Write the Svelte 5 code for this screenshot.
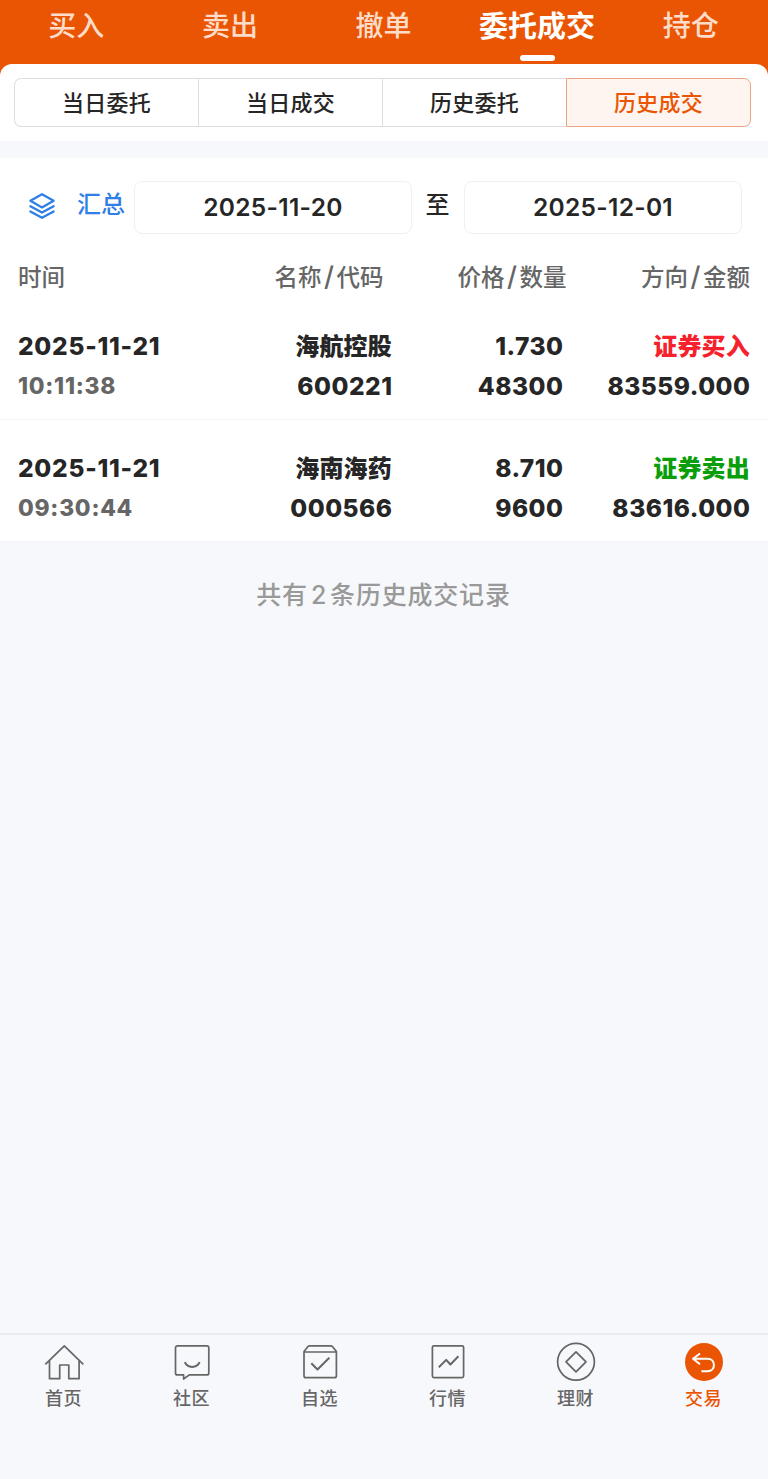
<script lang="ts">
  const tabs = ["买入", "卖出", "撤单", "委托成交", "持仓"];
  const subTabs = ["当日委托", "当日成交", "历史委托", "历史成交"];
  const columns = [["时间"], ["名称", "代码"], ["价格", "数量"], ["方向", "金额"]];

  const records = [
    { date: "2025-11-21", time: "10:11:38", name: "海航控股", code: "600221", price: "1.730", qty: "48300", side: "buy", label: "证券买入", amount: "83559.000" },
    { date: "2025-11-21", time: "09:30:44", name: "海南海药", code: "000566", price: "8.710", qty: "9600", side: "sell", label: "证券卖出", amount: "83616.000" },
  ];

  const nav = [
    { id: "home", label: "首页" },
    { id: "community", label: "社区" },
    { id: "watchlist", label: "自选" },
    { id: "market", label: "行情" },
    { id: "wealth", label: "理财" },
    { id: "trade", label: "交易" },
  ];

  let activeTab = $state("委托成交");
  let activeSub = $state("历史成交");
  let activeNav = $state("trade");
</script>

<div class="page">
  <header class="top">
    {#each tabs as tab (tab)}
      <button class="top__tab" class:active={tab === activeTab} onclick={() => (activeTab = tab)}>
        {tab}
      </button>
    {/each}
  </header>

  <div class="sheet">
    <div class="segments">
      {#each subTabs as sub (sub)}
        <button class="segment" class:active={sub === activeSub} onclick={() => (activeSub = sub)}>
          {sub}
        </button>
      {/each}
    </div>
  </div>

  <main class="content">
    <div class="filter">
      <svg class="filter__icon" viewBox="0 0 28 28" aria-hidden="true">
        <path d="M14 2.2 25.6 8.8 14 15.4 2.4 8.8Z" />
        <path d="M2.4 14.2 14 20.6l11.6-6.4M2.4 19.4 14 25.8l11.6-6.4" />
      </svg>
      <span class="filter__summary">汇总</span>
      <div class="filter__date">2025-11-20</div>
      <span class="filter__to">至</span>
      <div class="filter__date">2025-12-01</div>
    </div>

    <div class="head">
      {#each columns as [first, second] (first)}
        <span>{first}{#if second}<span class="head__slash">/</span>{second}{/if}</span>
      {/each}
    </div>

    {#each records as r (r.code)}
      <div class="record">
        <div class="record__cell">
          <span>{r.date}</span>
          <span class="record__time">{r.time}</span>
        </div>
        <div class="record__cell">
          <span class="record__cn">{r.name}</span>
          <span>{r.code}</span>
        </div>
        <div class="record__cell">
          <span>{r.price}</span>
          <span>{r.qty}</span>
        </div>
        <div class="record__cell">
          <span class="record__cn {r.side}">{r.label}</span>
          <span>{r.amount}</span>
        </div>
      </div>
    {/each}
  </main>

  <p class="total">共有<span class="total__count">{records.length}</span>条历史成交记录</p>

  <nav class="nav">
    {#each nav as item (item.id)}
      <button class="nav__item" class:active={item.id === activeNav} onclick={() => (activeNav = item.id)}>
        <svg class="nav__icon" viewBox="0 0 40 40" aria-hidden="true">
          {#if item.id === "home"}
            <path d="M1.3 22.3 20.3 3.9l19 18.4M5.5 18.5v18.2h10.2V23h9.1v13.7h10.3V18.5" />
          {:else if item.id === "community"}
            <path d="M5.5 3.8h29.3a2 2 0 0 1 2 2v25.1a2 2 0 0 1-2 2H17.3L11.6 37v-4.1H5.5a2 2 0 0 1-2-2V5.8a2 2 0 0 1 2-2Z" />
            <path d="M12.8 20.2c2.7 6.3 12.1 6.3 14.8 0" stroke-width="2" />
          {:else if item.id === "watchlist"}
            <path d="M4 9.5v24.2a2 2 0 0 0 2 2h28.4a2 2 0 0 0 2-2V9.5l-4-5a2 2 0 0 0-1.5-.7H9.5a2 2 0 0 0-1.5.7ZM4 10h32.4" />
            <path d="m11.3 21.3 6.2 6.2 11.8-11.8" stroke-width="2" />
          {:else if item.id === "market"}
            <rect x="4.4" y="3.8" width="31.2" height="31.8" rx="1.5" />
            <path d="m10.8 25.3 7.4-7.4 4.2 4.6 8-8.2" stroke-width="2" />
          {:else if item.id === "wealth"}
            <circle cx="20" cy="19.8" r="18.4" />
            <path d="m20 9.8 10 10-10 10-10-10Z" />
          {:else}
            <circle class="disc" cx="20" cy="20" r="19" />
            <path class="arrow" d="m16 11.5-7 5.3 7 5.4M9.8 16.8h13.7c8.6 0 8.6 12.4 0 12.4h-6.1" />
          {/if}
        </svg>
        <span>{item.label}</span>
      </button>
    {/each}
  </nav>
</div>

<style>
  :global(body) { background: #f7f8fb; }

  .page {
    box-sizing: border-box;
    display: flex;
    flex-direction: column;
    width: 768px;
    height: 1479px;
    overflow: hidden;
    background: #f7f8fb;
    color: #262626;
    font-family: Inter, "Noto Sans CJK SC", sans-serif;
    font-feature-settings: "calt" 0;
  }

  button {
    margin: 0;
    padding: 0;
    border: 0;
    background: none;
    color: inherit;
    font: inherit;
    cursor: pointer;
  }

  .top {
    display: grid;
    grid-template-columns: repeat(5, 1fr);
    height: 76px;
    background: #ea5504;
  }

  .top__tab {
    display: flex;
    flex-direction: column;
    align-items: center;
    height: 64px;
    padding-right: 1px;
    color: #fddcc9;
    font-size: 28px;
    font-weight: 500;
    line-height: 53px;
  }

  .top__tab.active {
    color: #fff;
    font-weight: 700;
    font-size: 29px;
    line-height: 54px;
  }

  .top__tab.active::after {
    content: "";
    width: 35px;
    height: 6px;
    margin-top: 1px;
    border-radius: 3px;
    background: #fff;
  }

  .sheet {
    box-sizing: border-box;
    height: 77px;
    margin-top: -12px;
    padding: 14px 17px 0 14px;
    border-radius: 12px 12px 0 0;
    background: #fff;
  }

  .segments {
    display: grid;
    grid-template-columns: 184px 184px 184px 185px;
  }

  .segment {
    height: 49px;
    border: 1px solid #dcdee0;
    border-right-width: 0;
    font-size: 22px;
    font-weight: 500;
    letter-spacing: 0.3px;
    line-height: 49px;
  }

  .segment:first-child { border-radius: 7px 0 0 7px; }

  .segment:last-child {
    border-right-width: 1px;
    border-radius: 0 7px 7px 0;
  }

  .segment.active {
    border-color: #eba585;
    background: #fef5f0;
    color: #ea5504;
  }

  .content {
    margin-top: 17px;
    background: #fff;
  }

  .filter {
    display: flex;
    align-items: center;
    height: 98px;
    padding-left: 28px;
  }

  .filter__icon {
    width: 28px;
    height: 28px;
    margin-top: -3px;
    fill: none;
    stroke: #2f7fe6;
    stroke-width: 2.3;
    stroke-linejoin: round;
    stroke-linecap: round;
  }

  .filter__summary {
    width: 57px;
    margin: -10px 0 0 21px;
    color: #2f7fe6;
    font-size: 24px;
    font-weight: 500;
  }

  .filter__date {
    box-sizing: border-box;
    width: 278px;
    height: 53px;
    border: 1px solid #f0f0f2;
    border-radius: 8px;
    font-size: 24.5px;
    font-weight: 600;
    letter-spacing: 0.3px;
    line-height: 51px;
    text-align: center;
  }

  .filter__to {
    box-sizing: border-box;
    width: 52px;
    margin-top: -10px;
    padding-right: 1px;
    font-size: 24px;
    font-weight: 500;
    text-align: center;
  }

  .head {
    display: grid;
    grid-template-columns: 182px 183.5px 183px 183.5px;
    height: 42px;
    padding: 0 18px;
    color: #666;
    font-size: 23.5px;
    font-weight: 500;
    line-height: 43px;
    text-align: right;
  }

  .head > span:first-child { text-align: left; }

  .head__slash {
    margin: 0 2.5px;
    font-size: 27px;
    line-height: 1;
  }

  .record {
    box-sizing: border-box;
    display: grid;
    grid-template-columns: 182px 192.5px 171px 187px;
    height: 122px;
    padding: 28px 17.5px 0 18px;
    border-bottom: 1px solid #f3f3f5;
    font-size: 24.5px;
    font-weight: 800;
    letter-spacing: 0.5px;
    line-height: 40px;
  }

  .record__cell {
    display: flex;
    flex-direction: column;
    align-items: flex-end;
  }

  .record__cell:first-child {
    align-items: flex-start;
    letter-spacing: 0.75px;
  }

  .record__cn {
    margin-bottom: -2px;
    padding-right: 0.5px;
    font-size: 24px;
    letter-spacing: 0.2px;
    line-height: 42px;
  }

  .record__time {
    color: #666;
    font-size: 22.8px;
    font-weight: 800;
  }

  .buy { color: #f5222d; }
  .sell { color: #0a9e0a; }

  .total {
    flex: 1;
    margin: 0;
    padding: 33px 1px 0 0;
    color: #999;
    font-size: 25px;
    font-weight: 500;
    letter-spacing: 0.8px;
    line-height: 41px;
    text-align: center;
  }

  .total__count { margin: 0 3px; }

  .nav {
    box-sizing: border-box;
    display: grid;
    grid-template-columns: repeat(6, 1fr);
    height: 146px;
    padding-top: 7px;
    border-top: 2px solid #ebecef;
  }

  .nav__item {
    display: flex;
    flex-direction: column;
    align-items: center;
    padding-right: 1px;
    color: #666;
    font-size: 18px;
    font-weight: 500;
    letter-spacing: 0.4px;
    line-height: 34px;
  }

  .nav__icon {
    width: 40px;
    height: 40px;
    fill: none;
    stroke: #666;
    stroke-width: 1.7;
    stroke-linejoin: round;
  }

  .nav__item.active { color: #ea5504; }

  .disc {
    fill: #ea5504;
    stroke: none;
  }

  .arrow {
    stroke: #fff;
    stroke-width: 2;
  }
</style>
